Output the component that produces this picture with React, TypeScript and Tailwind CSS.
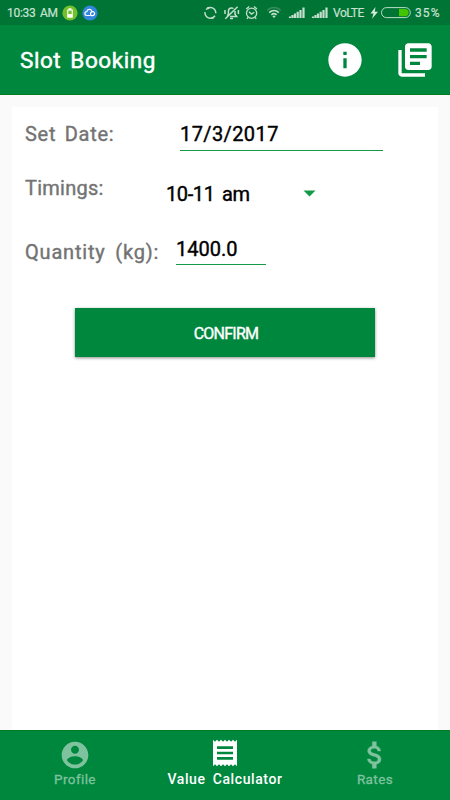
import React from "react";

function StatusBar() {
  return (
    <div className="flex h-[25px] shrink-0 items-center bg-[#007434] text-[12px] leading-[25px] text-[#c9e2d3]">
      <span className="ml-[7px] w-[55px] pt-px tracking-[-0.3px] [word-spacing:2px] whitespace-nowrap [-webkit-text-stroke:0.2px]">10:33 AM</span>
      <svg className="h-4 w-4" viewBox="0 0 16 16">
        <circle cx="8" cy="8" r="7.6" fill="#72c02c" />
        <path d="M6.6 3.2h2.8v1.2h1.4v8.4H5.2V4.4h1.4z" fill="#fff" />
        <path d="M6.3 5.6h3.4V9H6.3z" fill="#72c02c" />
      </svg>
      <svg className="ml-1 h-4 w-4" viewBox="0 0 16 16">
        <circle cx="8" cy="8" r="7.6" fill="#3485dc" />
        <path d="M8.6 10.5H4.8a1.9 1.9 0 0 1 0-3.8 2.6 2.6 0 0 1 5-.6M8.6 10.5V8.7a2 2 0 1 1 2 1.9H9" fill="none" stroke="#fff" strokeWidth="1.2" />
      </svg>
      <svg className="ml-auto h-4 w-[126px] shrink-0" viewBox="203 5 126 16" fill="none" stroke="#c3dfce" strokeWidth="1.3">
        <circle cx="210.4" cy="12.9" r="5.4" strokeWidth="1.5" strokeDasharray="14.4 2.56" strokeDashoffset="-3" />
        <path d="M206.6 7.4l3.2-.6-1 2.6zM214.2 18.4l-3.2.6 1-2.6z" fill="#c3dfce" stroke="none" />
        <path d="M227.2 15.8l1.2-1.6v-2.6c0-2.2 1.3-3.7 3.1-3.7.7 0 1.4.2 2 .6M235 11v3.2l1.6 2.2h-6.5M230 18.5h3M225.3 18.7L237.6 6.7M225 10v4M238.4 10v4" strokeWidth="1.5" />
        <circle cx="251.6" cy="13.2" r="5.1" />
        <path d="M249 11.8l2.5 2.3 2.8-1.8M246.2 9l3-2.5M257 9l-3-2.5M248 17.5l-1 1.3M255.2 17.5l1 1.3" />
        <path d="M267.2 10.5c3.8-4 9.7-4 13.5 0" stroke="#338c5a" strokeWidth="1.6" />
        <path d="M269.2 12.6c2.8-2.8 6.8-2.8 9.6 0M271.4 14.8c1.6-1.4 3.6-1.4 5.2 0" strokeWidth="1.6" />
        <path d="M272.4 16.2L274 18l1.6-1.8q-1.6-1.2-3.2 0z" fill="#c3dfce" stroke="none" />
        <g strokeWidth="2.2">
          <path d="M290 18v-1.5M292.5 18v-3M295 18v-4.5M297.7 18v-6.3M300.5 18v-8M303.5 18V7.6" />
          <path d="M313 18v-1.5M315.5 18v-3M318 18v-4.5M320.7 18v-6.3M323.5 18v-8M326.5 18V7.6" />
        </g>
      </svg>
      <span className="ml-1 w-[32px] pt-px tracking-[-0.45px] whitespace-nowrap [-webkit-text-stroke:0.2px]">VoLTE</span>
      <svg className="ml-[5px] h-[14px] w-[41px] shrink-0" viewBox="370 6 41 14">
        <path d="M375.5 7l-5 6.4h3l-1.5 5.3 6-7h-3.2z" fill="#d4eadc" />
        <rect x="381.5" y="7.6" width="28.8" height="10" rx="5" fill="#007434" stroke="#b9dcc7" />
        <path d="M399 9h6a3.6 3.6 0 0 1 0 7.2h-6z" fill="#43c400" />
      </svg>
      <span className="ml-[4px] mr-[7px] w-[28px] pt-px tracking-[1.1px] whitespace-nowrap [-webkit-text-stroke:0.2px]">35%</span>
    </div>
  );
}

function Header() {
  return (
    <header className="flex h-[70px] shrink-0 items-center border-b border-[#007b1f] bg-[#00873e] pl-[20px] pr-[15px] text-white">
      <h1 className="pt-px text-[22.5px] leading-[30px] tracking-[0.55px] [word-spacing:3px] whitespace-nowrap [-webkit-text-stroke:0.5px]">Slot Booking</h1>
      <svg className="ml-auto h-10 w-10" viewBox="0 0 24 24" fill="currentColor">
        <path d="M12 2C6.48 2 2 6.48 2 12s4.48 10 10 10 10-4.48 10-10S17.52 2 12 2zm1 15h-2v-6h2v6zm0-8h-2V7h2v2z" />
      </svg>
      <svg className="ml-[30px] h-10 w-10" viewBox="0 0 24 24" fill="currentColor">
        <path d="M4 6H2v14c0 1.1.9 2 2 2h14v-2H4V6zm16-4H8c-1.1 0-2 .9-2 2v12c0 1.1.9 2 2 2h12c1.1 0 2-.9 2-2V4c0-1.1-.9-2-2-2zm-1 9H9V9h10v2zm-4 4H9v-2h6v2zm4-8H9V5h10v2z" />
      </svg>
    </header>
  );
}

function BookingForm() {
  return (
    <main className="flex min-h-0 flex-1 flex-col bg-[#fafafa] px-3 pt-3">
      <section className="flex flex-1 flex-col bg-white pl-[13px] text-[20px] leading-[27px] text-black whitespace-nowrap [-webkit-text-stroke:0.4px]">
        <div className="mt-[14px] flex h-[30px]">
          <span className="w-[155px] tracking-[0.7px] text-[#737373] [word-spacing:3px]">Set Date:</span>
          <span className="h-[30px] w-[203px] border-b border-[#129a49] tracking-[0.4px]">17/3/2017</span>
        </div>
        <div className="mt-6 flex h-[38px] items-start">
          <span className="w-[141px] tracking-[0.25px] text-[#737373]">Timings:</span>
          <span className="mt-[6px] w-[137px] tracking-[-0.4px] [word-spacing:3px]">10-11 am</span>
          <svg className="mt-[15px] h-[7px] w-[13px]" viewBox="0 0 13 7" fill="#129a49"><path d="M.5.5h12l-6 6z" /></svg>
        </div>
        <div className="mt-[22px] flex h-[30px]">
          <span className="mt-1 w-[151px] tracking-[0.8px] text-[#737373] [word-spacing:4px]">Quantity (kg):</span>
          <span className="h-[30px] w-[90px] border-b border-[#129a49] leading-[29px]">1400.0</span>
        </div>
        <button className="ml-[50px] mt-[43px] h-[49px] w-[300px] bg-[#00873e] pl-[2px] pt-px text-[16px] tracking-[-0.75px] text-white shadow-[0_1px_3px_rgba(0,0,0,0.45)]">CONFIRM</button>
      </section>
    </main>
  );
}

function BottomNav() {
  return (
    <nav className="grid h-[70px] shrink-0 grid-cols-3 border-t border-[#007b1f] bg-[#00873e] text-center whitespace-nowrap">
      <div className="flex flex-col items-center pt-2 text-[#7fc39e]">
        <svg className="h-8 w-8" viewBox="0 0 24 24" fill="currentColor">
          <path d="M12 2C6.48 2 2 6.48 2 12s4.48 10 10 10 10-4.48 10-10S17.52 2 12 2zm0 3c1.66 0 3 1.34 3 3s-1.34 3-3 3-3-1.34-3-3 1.34-3 3-3zm0 14.2c-2.5 0-4.71-1.28-6-3.22.03-1.99 4-3.08 6-3.08 1.99 0 5.97 1.09 6 3.08-1.29 1.94-3.5 3.22-6 3.22z" />
        </svg>
        <span className="text-[13.5px] leading-[17px] tracking-[0.4px] [-webkit-text-stroke:0.3px]">Profile</span>
      </div>
      <div className="flex flex-col items-center pt-[6px] text-white">
        <svg className="h-8 w-8" viewBox="0 0 24 24" fill="currentColor">
          <path d="M18 17H6v-2h12v2zm0-4H6v-2h12v2zm0-4H6V7h12v2zM3 22l1.5-1.5L6 22l1.5-1.5L9 22l1.5-1.5L12 22l1.5-1.5L15 22l1.5-1.5L18 22l1.5-1.5L21 22V2l-1.5 1.5L18 2l-1.5 1.5L15 2l-1.500 1.500L12 2l-1.500 1.500L9 2 7.500 3.500 6 2 4.500 3.500 3 2v20z" />
        </svg>
        <span className="text-[14px] font-medium leading-[20px] tracking-[0.6px] [word-spacing:3px]">Value Calculator</span>
      </div>
      <div className="flex flex-col items-center pt-2 text-[#7fc39e]">
        <svg className="h-8 w-8" viewBox="0 0 24 24" fill="currentColor">
          <path d="M11.800 10.900c-2.270-.59-3-1.200-3-2.150 0-1.090 1.010-1.850 2.700-1.850 1.780 0 2.440.85 2.500 2.100h2.210c-.07-1.720-1.120-3.300-3.210-3.810V2h-3v3.160c-1.940.42-3.500 1.680-3.500 3.610 0 2.310 1.910 3.460 4.700 4.130 2.500.6 3 1.480 3 2.410 0 .69-.49 1.790-2.700 1.790-2.060 0-2.870-.92-2.980-2.100h-2.200c.12 2.190 1.760 3.420 3.680 3.830V22h3v-3.150c1.950-.37 3.500-1.500 3.500-3.550 0-2.840-2.430-3.810-4.700-4.400z" stroke="currentColor" strokeWidth=".3" />
        </svg>
        <span className="text-[13.5px] leading-[17px] tracking-[0.4px] [-webkit-text-stroke:0.3px]">Rates</span>
      </div>
    </nav>
  );
}

export default function App() {
  return (
    <div className="flex h-[800px] w-[450px] flex-col overflow-hidden font-['Roboto','Liberation_Sans',sans-serif]">
      <StatusBar />
      <Header />
      <BookingForm />
      <BottomNav />
    </div>
  );
}
